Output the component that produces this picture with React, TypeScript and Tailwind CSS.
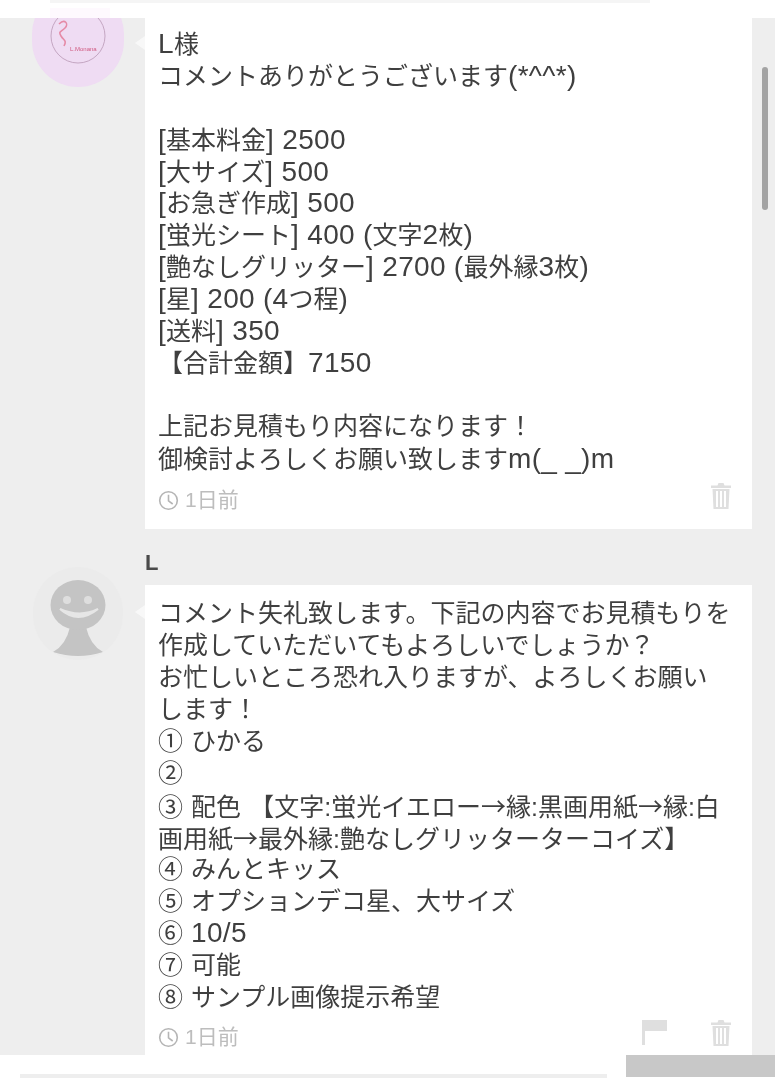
const font = { fontFamily: '"Liberation Sans","Noto Sans CJK JP",sans-serif' };
const cjk = { fontFamily: '"Noto Sans CJK JP",sans-serif' };

function Clock() {
  return (
    <svg width="21" height="21" viewBox="0 0 21 21" fill="none" stroke="#b5b5b5" strokeWidth="1.6">
      <circle cx="10.5" cy="10.5" r="8.8" />
      <path d="M10.5 4.8v6l4.2 3.2" />
    </svg>
  );
}

function Trash() {
  return (
    <svg width="22" height="28" viewBox="0 0 22 28" fill="#dfdfdf">
      <path d="M7.5 3.5 8.5 1h5l1 2.5H21V6H1V3.5z" />
      <path d="M2.5 7h17l-1 20h-15zM6 9v16h2V9zm4 0v16h2V9zm4 0v16h2V9z" />
    </svg>
  );
}

function Flag() {
  return (
    <svg width="28" height="26" viewBox="0 0 28 26" fill="#dfdfdf">
      <rect x="2" y="1" width="3" height="25" />
      <rect x="5" y="1" width="22" height="11" />
    </svg>
  );
}

function Time() {
  return (
    <div className="mt-[6px] flex items-center gap-[6px] text-[21px] leading-[24px] text-[#bdbdbd]">
      <Clock />
      <span>1日前</span>
    </div>
  );
}

const first = [
  "L様", "コメントありがとうございます(*^^*)", "",
  "[基本料金] 2500", "[大サイズ] 500", "[お急ぎ作成] 500", "[蛍光シート] 400 (文字2枚)",
  "[艶なしグリッター] 2700 (最外縁3枚)", "[星] 200 (4つ程)", "[送料] 350", "【合計金額】7150", "",
  "上記お見積もり内容になります！", "御検討よろしくお願い致しますm(_ _)m",
];

const second = [
  "コメント失礼致します。下記の内容でお見積もりを", "作成していただいてもよろしいでしょうか？",
  "お忙しいところ恐れ入りますが、よろしくお願い", "します！", "① ひかる", "②",
  "③ 配色 【文字:蛍光イエロー→縁:黒画用紙→縁:白", "画用紙→最外縁:艶なしグリッターターコイズ】",
  "④ みんとキッス", "⑤ オプションデコ星、大サイズ", "⑥ 10/5", "⑦ 可能", "⑧ サンプル画像提示希望",
];

function Line({ text }: { text: string }) {
  const parts = text.split(/([\x20-\x39\x3b-\x7e]+|→)/).filter(Boolean);
  return (
    <>
      {parts.map((p, i) =>
        p === "→" ? (
          <span key={i} style={cjk}>→</span>
        ) : /^[\x20-\x39\x3b-\x7e]+$/.test(p) ? (
          <span key={i} className="text-[28px] tracking-[0.3px]">{p}</span>
        ) : (
          <span key={i}>{p}</span>
        ),
      )}
    </>
  );
}

function Lines({ items, rowClass }: { items: string[]; rowClass: string }) {
  return (
    <div className="text-[25px] text-[#3f3f3f] whitespace-pre">
      {items.map((t, i) => (
        <div key={i} className={rowClass}>
          <Line text={t} />
        </div>
      ))}
    </div>
  );
}

function Tail({ className }: { className: string }) {
  return <div className={`absolute left-[-10px] w-0 h-0 border-y-[7px] border-y-transparent border-r-[10px] ${className}`} />;
}

export default function App() {
  return (
    <div style={font} className="w-[775px] h-[1080px] overflow-hidden bg-white flex flex-col blur-[0.7px]">
      <div className="h-[18px] shrink-0 relative">
        <div className="ml-[50px] mr-[125px] h-[3px] bg-[#f5f5f5]" />
        <div className="absolute left-[50px] top-[8px] w-[60px] h-[10px] bg-[#fef9fe]" />
      </div>
      <div className="h-[1037px] shrink-0 bg-[#eeeeee] flex overflow-hidden">
        <div className="w-[145px] shrink-0 relative">
          <div className="absolute left-[32px] top-[-30px] w-[92px] h-[99px] rounded-full bg-[#efdcf3]">
            <svg viewBox="0 0 92 99" width="92" height="99" fill="none">
              <circle cx="46" cy="48" r="27" stroke="#c4a6c2" strokeWidth="1" />
              <path d="M27 36c6-6 10 0 6 4s-7 3-4 8 6 4 3 10" stroke="#e58aa6" strokeWidth="1.6" />
              <text x="38" y="63" fontSize="6" fill="#d05a80" fontFamily="Liberation Sans">L.Monana</text>
            </svg>
          </div>
          <div className="absolute left-[33px] top-[549px] w-[90px] h-[93px] rounded-full bg-[#ebebeb] overflow-hidden">
            <svg viewBox="0 0 90 93" width="90" height="93">
              <path d="M20 85q13-7 17-25h16q4 18 17 25q-25 8-50 0z" fill="#c4c4c4" />
              <ellipse cx="45" cy="38" rx="27.5" ry="25" fill="#c4c4c4" />
              <circle cx="34" cy="33" r="4" fill="#dedede" />
              <circle cx="55" cy="33" r="4" fill="#dedede" />
              <path d="M27 42q18 16 38 0q-18 9-38 0z" fill="#e6e6e6" stroke="#e6e6e6" strokeWidth="2" />
            </svg>
          </div>
        </div>
        <div className="w-[607px] shrink-0 flex flex-col">
          <div className="relative bg-white h-[511px] shrink-0 pl-[13px] pr-[20px] pt-[10px] flex flex-col">
            <Tail className="top-[18px] border-r-[#f8f8f8]" />
            <Lines items={first} rowClass="h-[31.9px] leading-[31.9px]" />
            <div className="mt-[8px] flex items-start justify-between">
              <Time />
              <Trash />
            </div>
          </div>
          <div className="h-[56px] shrink-0 flex items-center pt-[10px] text-[22px] font-bold text-[#4a4a4a]">L</div>
          <div className="relative bg-white flex-1 pl-[13px] pr-[20px] pt-[12px] flex flex-col">
            <Tail className="top-[20px] border-r-[#f8f8f8]" />
            <Lines items={second} rowClass="h-[32px] leading-[32px]" />
            <div className="mt-[6px] flex items-start justify-between">
              <Time />
              <div className="flex items-start gap-[42px]">
                <Flag />
                <Trash />
              </div>
            </div>
          </div>
        </div>
        <div className="flex-1 pt-[49px] pl-[10px]">
          <div className="w-[6px] h-[143px] bg-[#a3a3a3] rounded-full" />
        </div>
      </div>
      <div className="flex-1 flex justify-between items-start">
        <div className="ml-[20px] mt-[19px] w-[587px] h-[4px] bg-[#eeeeee]" />
        <div className="w-[149px] h-[22px] bg-[#c8c8c8]" />
      </div>
    </div>
  );
}
